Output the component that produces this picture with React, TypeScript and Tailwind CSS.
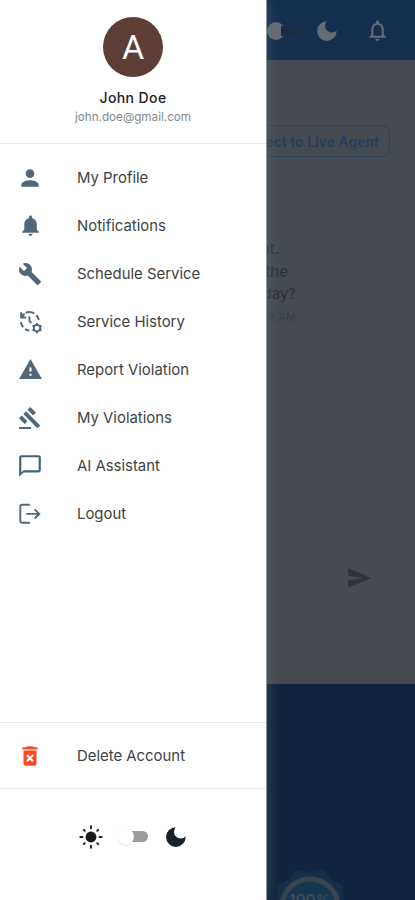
import type { ReactNode } from "react"
import {
  MdBuild,
  MdChatBubbleOutline,
  MdDeleteForever,
  MdGavel,
  MdNotifications,
  MdNotificationsNone,
  MdPerson,
  MdSend,
  MdWarning,
} from "react-icons/md"

function HistoryIcon() {
  return (
    <svg width="26" height="26" viewBox="0 0 26 26" fill="none" stroke="currentColor" strokeWidth="2">
      <path d="M8.6 3.9a9 9 0 0 1 8.6.5M19.4 6.3a9 9 0 0 1 2.4 4.6" />
      <path d="M3.8 13.2a9 9 0 0 0 2.4 5M8 20a9 9 0 0 0 4.3 1.6" />
      <path d="M4.2 3.2v5.2h5M4.6 8l3-3.4" />
      <path d="M12.4 7.2v5l2 1.8" strokeWidth="1.8" />
      <circle cx="20" cy="19.1" r="3.2" strokeWidth="1.8" />
      <path
        d="M20 14v2M20 22.2v2M15.5 16.5l1.8 1.1M22.7 20.6l1.8 1.1M15.5 21.7l1.8-1.1M22.7 17.6l1.8-1.1"
        strokeWidth="2"
      />
    </svg>
  )
}

function LogoutIcon() {
  return (
    <svg width="24" height="24" viewBox="0 0 24 24" fill="none" stroke="currentColor" strokeWidth="1.9">
      <path d="M11.8 2.8H3.9a1.6 1.6 0 0 0-1.6 1.6v14.8a1.6 1.6 0 0 0 1.6 1.6h7.9" />
      <path d="M8.3 11.9h13M16.7 7.3l4.6 4.6-4.6 4.6" />
    </svg>
  )
}

function MoonIcon({ className }: { className?: string }) {
  return (
    <svg className={className} width="20" height="20" viewBox="0 0 20 20" fill="currentColor">
      <path d="M9.8.3A5.7 5.7 0 0 0 19.6 9.4 9.8 9.8 0 1 1 9.8.3Z" />
    </svg>
  )
}

function SunIcon() {
  return (
    <svg width="24" height="24" viewBox="0 0 24 24" stroke="currentColor" strokeWidth="1.9" strokeLinecap="round">
      <circle cx="12" cy="12" r="4.5" fill="currentColor" />
      <path d="M12 1.3v1.9M12 20.8v1.9M1.3 12h2.2M20.5 12h2.2M4.8 4.8l1 1M18.2 18.2l1 1M4.8 19.2l1-1M18.2 5.8l1-1" />
    </svg>
  )
}

const menuItems = [
  { label: "My Profile", icon: <MdPerson size={26} /> },
  { label: "Notifications", icon: <MdNotifications size={25} /> },
  { label: "Schedule Service", icon: <MdBuild size={24} /> },
  { label: "Service History", icon: <HistoryIcon /> },
  { label: "Report Violation", icon: <MdWarning size={25} /> },
  { label: "My Violations", icon: <MdGavel size={24} /> },
  { label: "AI Assistant", icon: <MdChatBubbleOutline size={26} className="text-[#3f6277]" /> },
  { label: "Logout", icon: <LogoutIcon /> },
]

function MenuRow({ icon, label }: { icon: ReactNode; label: string }) {
  return (
    <li className="flex h-12 items-center">
      <span className="flex w-[60px] shrink-0 justify-center pb-px text-[#526879]">{icon}</span>
      <span className="ml-[17px] text-[14.9px] text-[#414244]">{label}</span>
    </li>
  )
}

function ChatScreen() {
  return (
    <div className="flex h-full flex-col bg-[#12233e]">
      <header className="flex h-[60px] shrink-0 items-center justify-end bg-[#142f50] pt-px pr-[25px] text-[#646b71]">
        <div className="flex w-[31px] items-center rounded-full">
          <span className="h-[18px] w-[18px] rounded-full bg-[#646b71]" />
          <span className="-ml-1 h-[10px] w-[17px] rounded-r-full bg-[#1b2b43]" />
        </div>
        <MoonIcon className="ml-[19px]" />
        <MdNotificationsNone size={25} className="ml-[28px]" />
      </header>

      <main className="flex h-[624px] shrink-0 flex-col bg-[#454a51]">
        <div className="flex justify-end pt-[65px] pr-[25px]">
          <button className="h-8 rounded-lg border border-[#2b405d] px-[10px] text-[14px] font-semibold text-[#263c5b]">
            Connect to Live Agent
          </button>
        </div>
        <div className="mt-[81px] w-[298px] pr-[2px] text-right text-[15px] leading-[22.5px] text-[#2b3037]">
          <p className="pr-[17px]">assistant.</p>
          <p className="pr-[8px]">with the</p>
          <p>today?</p>
          <p className="text-[11px] text-[#363d43]">10:18 AM</p>
        </div>
        <div className="mt-auto mb-[93px] flex justify-end pr-[43px] text-[#2f343a]">
          <MdSend size={26} />
        </div>
      </main>

      <footer className="mt-auto flex h-[31px] justify-end overflow-hidden pr-[68px]">
        <svg width="74" height="74" viewBox="0 0 74 74" className="shrink-0">
          <path
            d="M23 1l14 3 14-3 7 10 11 5 0 14 5 7-5 7 0 14-11 5-7 10-14-3-14 3-7-10-11-5 0-14-5-7 5-7 0-14 11-5Z"
            fill="#152f49"
            stroke="#152f49"
            strokeLinejoin="round"
          />
          <circle cx="37" cy="38" r="28" fill="#153850" stroke="#3b444d" strokeWidth="5" />
          <text x="37" y="36" textAnchor="middle" fontSize="15" fontWeight="bold" fill="#3f4b55">
            100%
          </text>
        </svg>
      </footer>
    </div>
  )
}

export default function App() {
  return (
    <div className="relative h-[900px] w-[415px] overflow-hidden font-['Inter','Liberation_Sans',sans-serif]">
      <ChatScreen />

      <aside className="absolute inset-y-0 left-0 flex w-[267px] flex-col border-r border-[#8e969b] bg-white shadow-[2px_0_12px_rgba(105,125,125,0.35)]">
        <div className="flex h-[144px] flex-col items-center border-b border-[#e8ebed] pt-[17px]">
          <div className="flex h-[60px] w-[60px] items-center justify-center rounded-full bg-[#5c3e36] pt-px font-['Roboto','Liberation_Sans',sans-serif] text-[34px] text-white">
            A
          </div>
          <p className="mt-[12px] text-[14px] leading-[18px] font-medium tracking-[0.4px] text-[#202124]">John Doe</p>
          <p className="mt-[2px] text-[11.7px] leading-4 text-[#85898d]">john.doe@gmail.com</p>
        </div>

        <ul className="pt-[10px]">
          {menuItems.map((item) => (
            <MenuRow key={item.label} icon={item.icon} label={item.label} />
          ))}
        </ul>

        <ul className="mt-auto flex h-[67px] flex-col justify-center border-y border-[#e8ebed] pt-[2px]">
          <MenuRow icon={<MdDeleteForever size={26} className="text-[#fb4a22]" />} label="Delete Account" />
        </ul>

        <div className="flex h-[111px] items-start pt-[36px] pl-[79px] text-[#17191c]">
          <SunIcon />
          <div className="mt-[3px] ml-[14px] flex items-center">
            <span className="relative h-[17px] w-[17px] rounded-full bg-white shadow-[0_1px_1px_rgba(0,0,0,0.12)]" />
            <span className="-ml-[2px] h-[11px] w-[16px] rounded-r-full bg-[#9c9c9c]" />
          </div>
          <MoonIcon className="mt-[2px] ml-[18px] text-[#18222c]" />
        </div>
      </aside>
    </div>
  )
}
